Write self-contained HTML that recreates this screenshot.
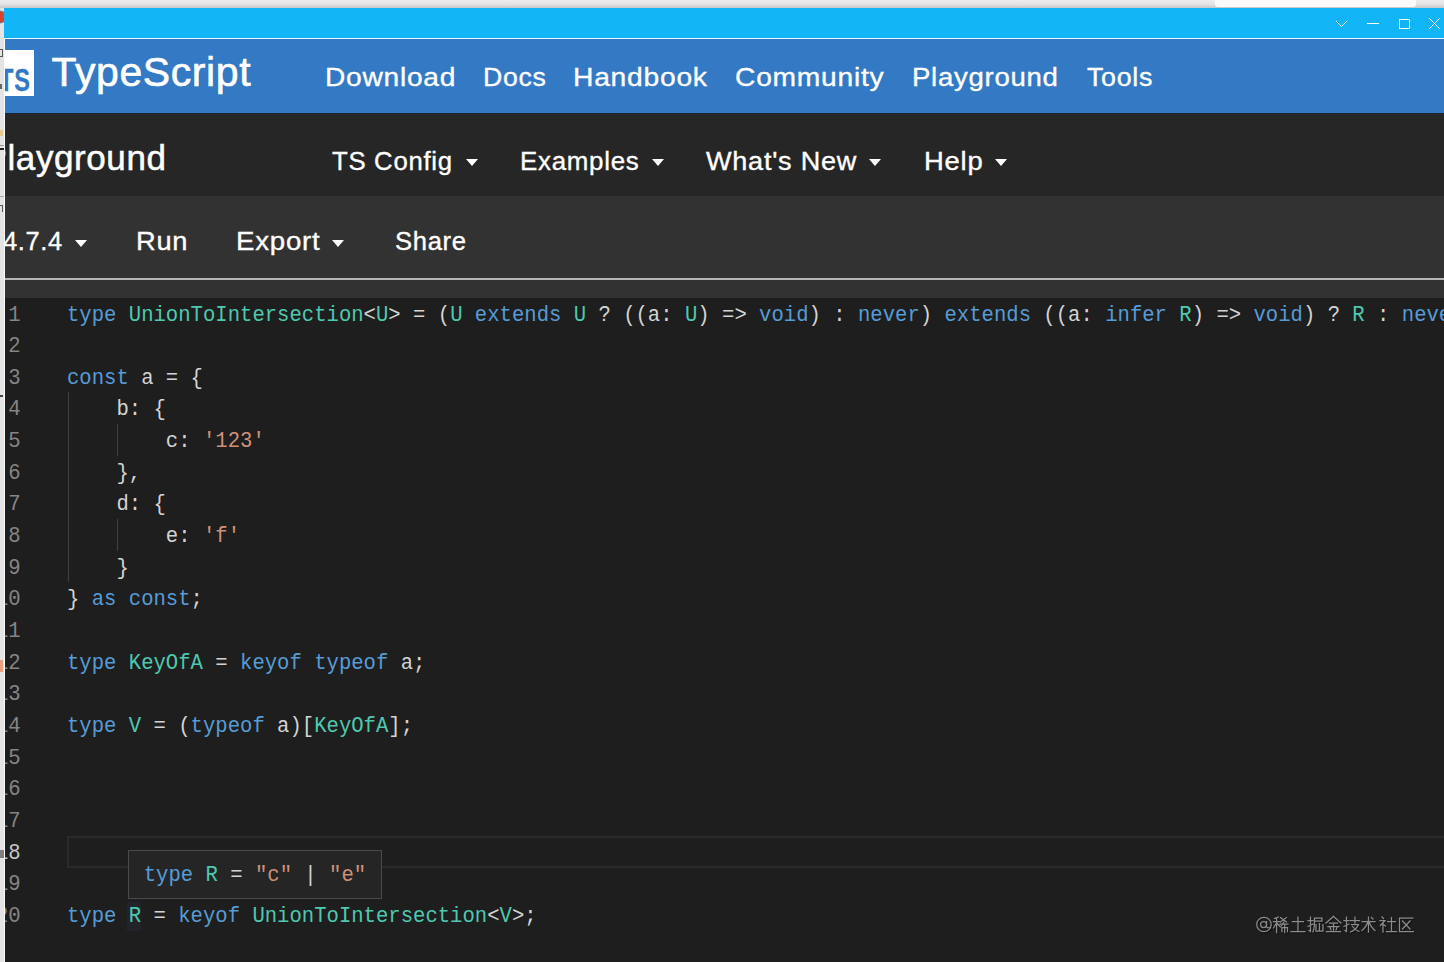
<!DOCTYPE html>
<html><head><meta charset="utf-8">
<style>
*{margin:0;padding:0;box-sizing:border-box}
html,body{width:1444px;height:962px;overflow:hidden;background:#1e1e1e;position:relative}
body{font-family:"Liberation Sans",sans-serif}
.a{position:absolute}
#topstrip{left:0;top:0;width:1444px;height:8px;background:linear-gradient(#ececf0,#e2e2e4 55%,#c6c6c6)}
#tabwhite{left:1215px;top:0;width:201px;height:7px;background:#fafafa;border-radius:0 0 3px 3px}
#titlebar{left:4px;top:8px;width:1440px;height:30px;background:#12b5f6}
#tline{left:4px;top:38px;width:1440px;height:1px;background:#e8f8ff}
#hdr{left:5px;top:39px;width:1439px;height:74px;background:#3479c3}
#nav2{left:5px;top:113px;width:1439px;height:83px;background:#262626;border-top:1px solid #1c2530}
#tool{left:5px;top:196px;width:1439px;height:82px;background:#323232}
#sep{left:5px;top:278px;width:1439px;height:2px;background:#b4b4b4}
#gap{left:5px;top:280px;width:1439px;height:17.5px;background:#323232}
#leftstrip{left:0;top:8px;width:4px;height:954px;background:#e4e4e4}
#leftline{left:4px;top:38px;width:1px;height:924px;background:#fbfbfb}
.nav{color:#fff;font-size:26.4px;top:61px;line-height:32px;white-space:nowrap;-webkit-text-stroke:0.35px #fff}
.nav2{color:#fff;font-size:25.5px;line-height:32px;white-space:nowrap;-webkit-text-stroke:0.35px #fff}
.caret{position:absolute;width:0;height:0;border-left:6.6px solid transparent;border-right:6.6px solid transparent;border-top:7.5px solid #fff}
.code{font-family:"Liberation Mono",monospace;font-size:20.6px;white-space:pre;color:#d4d4d4}
.ln{position:absolute;left:-20px;width:40.7px;text-align:right;color:#858585;height:31.65px;line-height:31.65px;transform:translateY(2.5px) scaleY(1.1);transform-origin:0 21.3px}
.cl{position:absolute;left:67px;height:31.65px;line-height:31.65px;transform:translateY(2.5px) scaleY(1.1);transform-origin:0 21.3px}
.k{color:#569cd6}.t{color:#4ec9b0}.s{color:#ce9178}
.guide{position:absolute;width:1px;background:#404040}
</style></head><body>
<div class="a" id="topstrip"></div>
<div class="a" id="tabwhite"></div>
<div class="a" id="titlebar"></div>
<div class="a" id="tline"></div>
<div class="a" id="hdr"></div>
<div class="a" id="nav2"></div>
<div class="a" id="tool"></div>
<div class="a" id="sep"></div>
<div class="a" id="gap"></div>

<!-- window controls -->
<svg class="a" style="left:1330px;top:14px" width="114" height="20" viewBox="1330 14 114 20">
<g stroke="#fff" stroke-width="1" fill="none">
<polyline points="1336,21 1341.5,26.5 1347,21"/>
<line x1="1367" y1="23.5" x2="1379" y2="23.5"/>
<rect x="1399.5" y="19.5" width="10" height="9"/>
<line x1="1429" y1="18" x2="1440" y2="29"/><line x1="1440" y1="18" x2="1429" y2="29"/>
</g></svg>

<!-- logo -->
<div class="a" style="left:-12px;top:49.5px;width:46px;height:46px;background:#fff"></div>
<div class="a" style="left:-1.5px;top:64.5px;font-size:31px;font-weight:bold;color:#3178c6;line-height:32px;white-space:nowrap;transform:scaleX(0.76);transform-origin:0 0;-webkit-text-stroke:0.3px #3178c6"><span style="letter-spacing:1px">T</span>S</div>
<div class="a" style="left:51.5px;top:48px;font-size:41px;color:#fff;line-height:48px;letter-spacing:0.6px;-webkit-text-stroke:0.6px #fff">TypeScript</div>

<div class="a nav" style="left:324.70px;letter-spacing:0.70px;transform:scaleX(1.0667);transform-origin:0 0">Download</div>
<div class="a nav" style="left:482.50px;letter-spacing:0.70px;transform:scaleX(1.0102);transform-origin:0 0">Docs</div>
<div class="a nav" style="left:573.20px;letter-spacing:0.70px;transform:scaleX(1.0700);transform-origin:0 0">Handbook</div>
<div class="a nav" style="left:735.40px;letter-spacing:0.70px;transform:scaleX(1.0696);transform-origin:0 0">Community</div>
<div class="a nav" style="left:912.00px;letter-spacing:0.70px;transform:scaleX(1.0438);transform-origin:0 0">Playground</div>
<div class="a nav" style="left:1087.00px;letter-spacing:0.70px;transform:scaleX(1.0157);transform-origin:0 0">Tools</div>

<div class="a" style="left:-16.5px;top:137.5px;font-size:35px;color:#fff;line-height:40px;letter-spacing:0.6px;-webkit-text-stroke:0.5px #fff">Playground</div>
<div class="a nav2" style="left:332.00px;top:145px;letter-spacing:0.70px;transform:scaleX(1.0085);transform-origin:0 0">TS Config</div><div class="caret" style="left:465.8px;top:159px"></div>
<div class="a nav2" style="left:520.10px;top:145px;letter-spacing:0.70px;transform:scaleX(1.0157);transform-origin:0 0">Examples</div><div class="caret" style="left:651.6px;top:159px"></div>
<div class="a nav2" style="left:706.00px;top:145px;letter-spacing:0.70px;transform:scaleX(1.0620);transform-origin:0 0">What's New</div><div class="caret" style="left:869.4px;top:159px"></div>
<div class="a nav2" style="left:923.50px;top:145px;letter-spacing:0.70px;transform:scaleX(1.0756);transform-origin:0 0">Help</div><div class="caret" style="left:995px;top:159px"></div>

<div class="a nav2" style="left:3px;top:225px;letter-spacing:0.6px">4.7.4</div><div class="caret" style="left:74.8px;top:240px"></div>
<div class="a nav2" style="left:136.00px;top:225px;letter-spacing:0.70px;transform:scaleX(1.0698);transform-origin:0 0">Run</div>
<div class="a nav2" style="left:235.80px;top:225px;letter-spacing:0.70px;transform:scaleX(1.0834);transform-origin:0 0">Export</div><div class="caret" style="left:332.4px;top:240px"></div>
<div class="a nav2" style="left:394.90px;top:225px;letter-spacing:0.70px;transform:scaleX(1.0029);transform-origin:0 0">Share</div>

<!-- editor -->
<div class="a code" id="ed" style="left:0;top:297.5px;width:1444px;height:665px;overflow:hidden">
<div class="a" style="left:66.5px;top:538.5px;width:1400px;height:31.5px;border:2.5px solid #2a2a2a"></div>
<div class="a" style="left:127px;top:604.35px;width:13.5px;height:29px;background:#222429"></div>
<div class="guide" style="left:67.5px;top:94.95px;height:189.90px"></div>
<div class="guide" style="left:116.5px;top:126.60px;height:31.65px"></div>
<div class="guide" style="left:116.5px;top:221.55px;height:31.65px"></div>
<div class="ln" style="top:0.00px;color:#858585">1</div>
<div class="cl" style="top:0.00px"><span class="k">type</span> <span class="t">UnionToIntersection</span>&lt;<span class="t">U</span>&gt; = (<span class="t">U</span> <span class="k">extends</span> <span class="t">U</span> ? ((a: <span class="t">U</span>) =&gt; <span class="k">void</span>) : <span class="k">never</span>) <span class="k">extends</span> ((a: <span class="k">infer</span> <span class="t">R</span>) =&gt; <span class="k">void</span>) ? <span class="t">R</span> : <span class="k">never</span></div>
<div class="ln" style="top:31.65px;color:#858585">2</div>
<div class="ln" style="top:63.30px;color:#858585">3</div>
<div class="cl" style="top:63.30px"><span class="k">const</span> a = {</div>
<div class="ln" style="top:94.95px;color:#858585">4</div>
<div class="cl" style="top:94.95px">    b: {</div>
<div class="ln" style="top:126.60px;color:#858585">5</div>
<div class="cl" style="top:126.60px">        c: <span class="s">'123'</span></div>
<div class="ln" style="top:158.25px;color:#858585">6</div>
<div class="cl" style="top:158.25px">    },</div>
<div class="ln" style="top:189.90px;color:#858585">7</div>
<div class="cl" style="top:189.90px">    d: {</div>
<div class="ln" style="top:221.55px;color:#858585">8</div>
<div class="cl" style="top:221.55px">        e: <span class="s">'f'</span></div>
<div class="ln" style="top:253.20px;color:#858585">9</div>
<div class="cl" style="top:253.20px">    }</div>
<div class="ln" style="top:284.85px;color:#858585">10</div>
<div class="cl" style="top:284.85px">} <span class="k">as</span> <span class="k">const</span>;</div>
<div class="ln" style="top:316.50px;color:#858585">11</div>
<div class="ln" style="top:348.15px;color:#858585">12</div>
<div class="cl" style="top:348.15px"><span class="k">type</span> <span class="t">KeyOfA</span> = <span class="k">keyof</span> <span class="k">typeof</span> a;</div>
<div class="ln" style="top:379.80px;color:#858585">13</div>
<div class="ln" style="top:411.45px;color:#858585">14</div>
<div class="cl" style="top:411.45px"><span class="k">type</span> <span class="t">V</span> = (<span class="k">typeof</span> a)[<span class="t">KeyOfA</span>];</div>
<div class="ln" style="top:443.10px;color:#858585">15</div>
<div class="ln" style="top:474.75px;color:#858585">16</div>
<div class="ln" style="top:506.40px;color:#858585">17</div>
<div class="ln" style="top:538.05px;color:#c6c6c6">18</div>
<div class="ln" style="top:569.70px;color:#858585">19</div>
<div class="ln" style="top:601.35px;color:#858585">20</div>
<div class="cl" style="top:601.35px"><span class="k">type</span> <span class="t">R</span> = <span class="k">keyof</span> <span class="t">UnionToIntersection</span>&lt;<span class="t">V</span>&gt;;</div>
</div>

<!-- tooltip -->
<div class="a" style="left:128px;top:849.5px;width:254px;height:49px;background:#252526;border:1.5px solid #4a4a4a"></div>
<div class="a code"><div class="cl" style="left:143.7px;top:857.5px"><span class="k">type</span> <span class="t">R</span> = <span class="s">"c"</span> | <span class="s">"e"</span></div></div>
<!-- watermark -->
<svg class="a" style="left:1250px;top:910px" width="180" height="30" viewBox="1250 910 180 30">
<defs><g id="wm">
<circle cx="1264" cy="924.5" r="7.2"/><circle cx="1263.6" cy="924.5" r="3"/><path d="M1266.6 921.5v4.5q0 2.5 2.5 1.5"/>
<path d="M1274.5 918.5l4 -1.5M1273.5 921.5h6M1276.6 918v14.5M1276.5 923l-3 5M1276.7 923l2.8 3M1280.5 917.5l6 4.5M1286.5 917.5l-6 4.5M1280 924h8M1284 922l-3.5 5M1282 927.5h5.5v4M1282 927.5v4M1284.7 925v7.5"/>
<path d="M1292.5 921.5h11M1298 917v14.5M1291 931.5h14"/>
<path d="M1308 920.5h5M1310.5 917v14.5l-1.5 -1M1308 926.5l5 -2.5M1314.5 918h7.5v3h-7.5M1314.5 918v5q0 5 -1.5 9M1316 924.5v6.5h7v-6.5M1319.5 923.5v7.5"/>
<path d="M1333.5 916.5l-7.5 6.5M1333.5 916.5l7.5 6.5M1329.5 923h8M1328 926.5h11M1333.5 923v8.5M1330 927.5l1 2.5M1337 927.5l-1 2.5M1326.5 931.5h14"/>
<path d="M1344 920.5h5M1346.5 917v14.5l-1.5 -1M1344 926.5l5 -2.5M1350.5 920.5h9M1355 917v6M1351.5 924.5h7q-2 5 -8 7.5M1352.5 926.5q2.5 3.5 6.5 5"/>
<path d="M1362 921.5h13M1368.5 917v15M1368 921.5q-2 6 -6 9M1369 921.5q2 6 6 9M1371.5 917.5l1.5 1.5"/>
<path d="M1382 917l1.5 1.5M1380 920.5h5l-4.5 5M1383 923.5v8.5M1383.5 924.5l2 1.5M1387.5 921.5h8M1391.5 917.5v14M1386.5 931.5h10"/>
<path d="M1413 918h-13.5v13.5h14M1402.5 921l7.5 8M1410 921l-7.5 8"/>
</g></defs>
<use href="#wm" fill="none" stroke="#000" stroke-opacity="0.45" stroke-width="1.6" stroke-linecap="square" transform="translate(0.9,0.9)"/>
<use href="#wm" fill="none" stroke="#8c8c8c" stroke-width="1.25" stroke-linecap="square"/>
</svg>
<div class="a" id="leftstrip"></div>
<div class="a" id="leftline"></div>
<div class="a" style="left:0;top:9px;width:4px;height:16px;background:radial-gradient(circle at 0 50%,#d8432a 0,#d8432a 55%,#5a8bc0 70%,transparent 75%)"></div>
<div class="a" style="left:0;top:49px;width:3px;height:8px;border:1px solid #555;border-left:none"></div>
<div class="a" style="left:0;top:84px;width:2px;height:5px;background:#666"></div>
<div class="a" style="left:0;top:145px;width:4px;height:1px;background:#999"></div>
<div class="a" style="left:0;top:130px;width:3px;height:6px;background:#e8c890"></div><div class="a" style="left:0;top:148px;width:4px;height:1.5px;background:#222"></div>
<div class="a" style="left:0;top:196px;width:4px;height:1px;background:#aaa"></div>
<div class="a" style="left:0;top:205px;width:3px;height:7px;border-top:1px solid #555;border-right:1px solid #555"></div>
<div class="a" style="left:0;top:395px;width:3px;height:2px;background:#444"></div>
<div class="a" style="left:0;top:660px;width:3px;height:12px;background:#e8a080"></div>
<div class="a" style="left:0;top:850px;width:4px;height:8px;background:#555;opacity:.7"></div>

</body></html>
